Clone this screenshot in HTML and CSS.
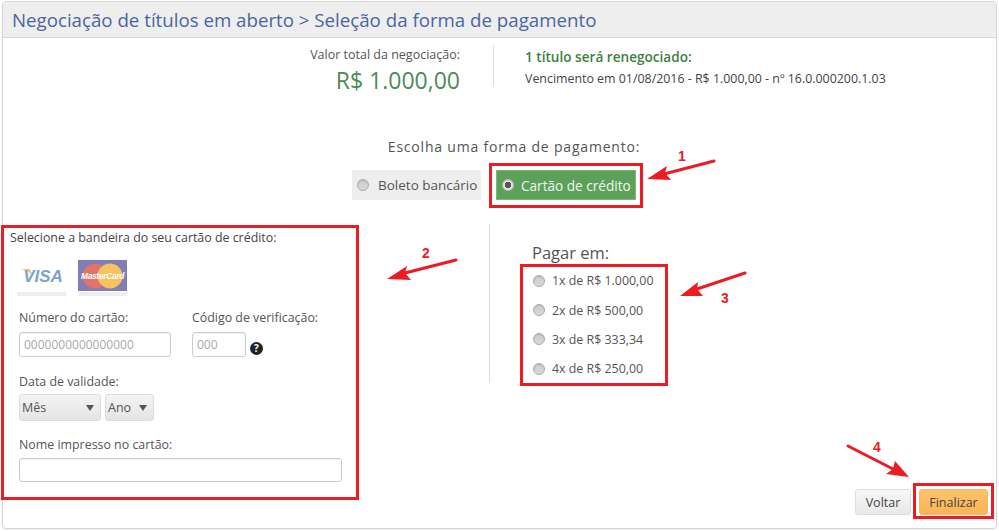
FILE: index.html
```html
<!DOCTYPE html>
<html lang="pt-BR">
<head>
<meta charset="utf-8">
<title>Seleção da forma de pagamento</title>
<link rel="stylesheet" href="styles.css">
</head>
<body>
<main class="card">
  <header class="card-head"><h1>Negociação de títulos em aberto &gt; Seleção da forma de pagamento</h1></header>
  <section class="summary">
    <div class="total">
      <div class="total-label">Valor total da negociação:</div>
      <div class="total-value">R$ 1.000,00</div>
    </div>
    <div class="titles">
      <div class="titles-head">1 título será renegociado:</div>
      <div class="titles-line">Vencimento em 01/08/2016 - R$ 1.000,00 - nº 16.0.000200.1.03</div>
    </div>
  </section>
  <section class="method">
    <div class="method-label">Escolha uma forma de pagamento:</div>
    <div class="method-options">
      <label class="method-opt"><span class="radio"></span>Boleto bancário</label>
      <label class="method-opt active"><span class="radio checked"></span>Cartão de crédito</label>
    </div>
  </section>
  <section class="columns">
    <form class="card-form">
      <div class="brand-label">Selecione a bandeira do seu cartão de crédito:</div>
      <div class="brands">
        <div class="brand">
          <svg width="49" height="32" viewBox="0 0 49 32"><path d="M3 9 L12 9 Q14 9 15 15 Q11 10 3 9Z" fill="#eec27a"/><text x="26" y="22" text-anchor="middle" class="visa-text">VISA</text></svg>
        </div>
        <div class="brand">
          <svg width="49" height="32" viewBox="0 0 49 32"><rect width="49" height="31" fill="#7f7fb3"/><circle cx="17" cy="16" r="12.500" fill="#e2736c"/><circle cx="32" cy="16" r="12.500" fill="#f7c25f"/><text x="24.500" y="19" text-anchor="middle" class="mc-text">MasterCard</text></svg>
        </div>
      </div>
      <div class="row-fields">
        <div class="field">
          <label class="field-label">Número do cartão:</label>
          <input class="input num" placeholder="0000000000000000">
        </div>
        <div class="field">
          <label class="field-label">Código de verificação:</label>
          <div class="code-row">
            <input class="input code" placeholder="000">
            <span class="help">?</span>
          </div>
        </div>
      </div>
      <label class="field-label date-label">Data de validade:</label>
      <div class="selects">
        <div class="select month">Mês<span class="caret"></span></div>
        <div class="select year">Ano<span class="caret"></span></div>
      </div>
      <label class="field-label name-label">Nome impresso no cartão:</label>
      <input class="input name">
    </form>
    <div class="installments">
      <div class="pay-title">Pagar em:</div>
      <label class="inst"><span class="radio"></span>1x de R$ 1.000,00</label>
      <label class="inst"><span class="radio"></span>2x de R$ 500,00</label>
      <label class="inst"><span class="radio"></span>3x de R$ 333,34</label>
      <label class="inst"><span class="radio"></span>4x de R$ 250,00</label>
    </div>
  </section>
  <footer class="actions">
    <button class="btn back" type="button">Voltar</button>
    <button class="btn finish" type="button">Finalizar</button>
  </footer>
</main>
<svg class="notes" width="999" height="531" viewBox="0 0 999 531">
  <g class="box">
    <rect x="490.500" y="164.500" width="151" height="42"/>
    <rect x="2.500" y="226.500" width="355" height="272"/>
    <rect x="521.500" y="265.500" width="145" height="119"/>
    <rect x="914.500" y="484.500" width="78" height="33"/>
  </g>
  <g class="arrow">
    <path d="M714 161 L664 174"/><path d="M647 179 L667 166 L665 173 L671 180Z" class="tip"/>
    <path d="M456 260 L405 273"/><path d="M387 279 L407 266 L405 273 L411 280Z" class="tip"/>
    <path d="M745 273 L697 289"/><path d="M680 296 L698 282 L697 289 L703 296Z" class="tip"/>
    <path d="M848 446 L893 469"/><path d="M909 477 L886 474 L893 469 L895 461Z" class="tip"/>
  </g>
  <g class="num-notes">
    <text x="682" y="161">1</text>
    <text x="426" y="258">2</text>
    <text x="725" y="303">3</text>
    <text x="877" y="452">4</text>
  </g>
</svg>
</body>
</html>
```
FILE: styles.css
```css
* { box-sizing: border-box; }
html, body { margin: 0; padding: 0; background: #fff; }
body {
  width: 999px;
  height: 531px;
  overflow: hidden;
  position: relative;
  font-family: "Open Sans", "Noto Sans", "Liberation Sans", sans-serif;
  color: #555;
  font-size: 12px;
  padding: 1px 2px 2px;
}
.card {
  height: 528px;
  border: 1px solid #d4d4d4;
  border-radius: 4px;
  box-shadow: 0 1px 1px rgba(0,0,0,.08);
  position: relative;
  display: flex;
  flex-direction: column;
}
.card-head {
  height: 36px;
  background: #eee;
  border-bottom: 1px solid #d8d8d8;
  padding-left: 9px;
  display: flex;
  align-items: center;
  border-radius: 3px 3px 0 0;
  flex: none;
}
.card-head h1 {
  margin: 0 0 1px;
  font-size: 18.7px;
  font-weight: 400;
  color: #4a66a0;
  white-space: nowrap;
}
.summary { display: flex; height: 42px; margin-top: 7px; flex: none; }
.total {
  width: 491px;
  padding-right: 33px;
  border-right: 1px solid #ddd;
  text-align: right;
}
.total-label { font-size: 12.5px; line-height: 16px; margin-top: 2px; }
.total-value { font-size: 23px; line-height: 28px; color: #4b8b57; margin-top: 3px; }
.titles { padding-left: 31px; }
.titles-head { font-size: 13.6px; font-weight: 600; color: #3f8040; line-height: 16px; margin-top: 4px; }
.titles-line { font-size: 12.4px; line-height: 16px; margin-top: 6px; color: #444; white-space: nowrap; }
.method { margin-top: 52px; height: 66px; flex: none; }
.method-label { text-align: center; width: 990px; padding-left: 32px; font-size: 14px; letter-spacing: .8px; line-height: 16px; }
.method-options { display: flex; margin-top: 15px; margin-left: 349px; }
.method-opt {
  display: flex;
  align-items: center;
  height: 30px;
  width: 129px;
  background: #eee;
  padding-left: 5px;
  font-size: 13.5px;
  margin-right: 15px;
}
.method-opt .radio { margin-right: 9px; }
.method-opt.active {
  width: 140px;
  background: #5ba15a;
  border: 1px solid #7db77c;
  color: #f2f7ee;
  font-weight: 500;
  font-size: 13.6px;
}
.method-opt.active .radio { margin-right: 7px; }
.radio {
  width: 12px;
  height: 12px;
  border-radius: 50%;
  background: linear-gradient(#ccc, #d8d8d8);
  border: 1px solid #aaa;
  margin-right: 7px;
  flex: none;
  box-shadow: inset 0 1px 1px rgba(0,0,0,.1);
}
.radio.checked {
  background: radial-gradient(circle, #555 0 3px, #e4e4e4 3.5px);
  border-color: #bbb;
}
.columns { display: flex; flex: none; height: 260px; margin-top: 17px; }
.card-form { width: 486px; padding-left: 7px; display: flex; flex-direction: column; align-items: flex-start; }
.brand-label { font-size: 12.4px; line-height: 16px; margin-top: 8px; color: #444; white-space: nowrap; }
.brands { display: flex; gap: 12px; margin-top: 14px; margin-left: 7px; }
.brand { width: 49px; height: 36px; border-bottom: 4px solid #eee; }
.brand svg { display: block; }
.visa-text { font: italic 700 17px "Liberation Sans", sans-serif; fill: #7aa5c9; }
.mc-text { font: italic 700 8.4px "Liberation Sans", sans-serif; fill: #fff; letter-spacing: -.3px; }
.row-fields { display: flex; gap: 21px; margin-top: 14px; margin-left: 9px; }
.field { display: flex; flex-direction: column; }
.field-label { font-size: 12.4px; line-height: 16px; color: #555; display: block; white-space: nowrap; }
.input {
  height: 25px;
  border: 1px solid #ccc;
  border-radius: 3px;
  font: 12px "Open Sans", "Noto Sans", sans-serif;
  padding: 0 4px;
  margin-top: 6px;
  color: #555;
  background: #fff;
  box-shadow: inset 0 1px 1px rgba(0,0,0,.05);
}
.input::placeholder { color: #aaa; opacity: 1; }
.num { width: 152px; }
.code { width: 54px; }
.code-row { display: flex; align-items: flex-end; gap: 4px; }
.help {
  width: 13px;
  height: 13px;
  border-radius: 50%;
  background: #222;
  color: #fff;
  font-size: 10px;
  font-weight: 700;
  line-height: 13px;
  text-align: center;
  margin-bottom: 2px;
}
.date-label { margin-top: 17px; margin-left: 9px; }
.selects { display: flex; gap: 4px; margin-top: 4px; margin-left: 9px; }
.select {
  height: 27px;
  border: 1px solid #ddd;
  border-radius: 3px;
  background: linear-gradient(#f4f4f4, #e4e4e4);
  display: flex;
  align-items: center;
  justify-content: space-between;
  padding: 0 6px 0 2px;
  font-size: 12.5px;
}
.month { width: 82px; }
.year { width: 49px; }
.caret { width: 0; height: 0; border-left: 4px solid transparent; border-right: 4px solid transparent; border-top: 6px solid #555; }
.name-label { margin-top: 16px; margin-left: 9px; }
.name { width: 323px; margin-left: 9px; margin-top: 5px; }
.installments {
  border-left: 1px solid #ddd;
  height: 159px;
  margin-top: 2px;
  padding-left: 43px;
}
.pay-title { font-size: 16.5px; line-height: 22px; margin-top: 18px; margin-bottom: 2px; margin-left: -1px; color: #555; white-space: nowrap; }
.inst { display: flex; align-items: center; height: 29.4px; font-size: 12.4px; white-space: nowrap; }
.inst .radio { margin-right: 7px; }
.actions {
  position: absolute;
  right: 8px;
  bottom: 13px;
  display: flex;
  gap: 8px;
}
.btn {
  height: 26px;
  border-radius: 3px;
  font: 12.5px "Open Sans", "Noto Sans", sans-serif;
  color: #444;
  padding: 0;
}
.back { width: 56px; border: 1px solid #ddd; background: linear-gradient(#f8f8f8, #e8e8e8); }
.finish { width: 69px; border: 1px solid #f4b860; background: linear-gradient(#fdc36f, #fbb452); }
.notes { position: absolute; left: 0; top: 0; pointer-events: none; }
.box rect { fill: none; stroke: #ed1c24; stroke-width: 3; }
.arrow path { stroke: #ed1c24; stroke-width: 3; stroke-linecap: round; fill: none; }
.arrow path.tip { fill: #ed1c24; stroke: none; }
.num-notes text { font: 700 14px "Liberation Sans", sans-serif; fill: #ed1c24; text-anchor: middle; }
```
